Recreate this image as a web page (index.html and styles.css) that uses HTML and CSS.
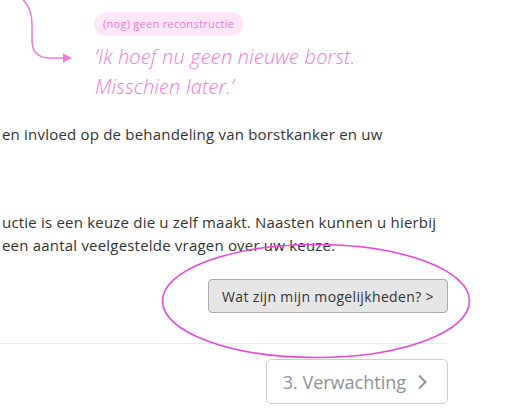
FILE: index.html
```html
<!DOCTYPE html>
<html lang="nl">
<head>
<meta charset="utf-8">
<title>Reconstructie</title>
<link rel="stylesheet" href="styles.css">
</head>
<body>
<div class="page">
  <header class="hero">
    <svg class="arrow" width="94" height="70" viewBox="0 0 94 70">
      <path d="M19 -4 C27 2 32 10 32 24 L32 40 C32 52 38 58 50 58 L64 58" fill="none" stroke="#f07ad8" stroke-width="1.5"/>
      <polygon points="63,53.5 72,58 63,62.5" fill="#f07ad8"/>
    </svg>
    <div class="hero-text">
      <span class="badge">(nog) geen reconstructie</span>
      <blockquote class="quote">‘Ik hoef nu geen nieuwe borst.<br>Misschien later.’</blockquote>
    </div>
  </header>

  <main class="content">
    <p class="intro">en invloed op de behandeling van borstkanker en uw</p>
    <p class="choice">uctie is een keuze die u zelf maakt. Naasten kunnen u hierbij<br>een aantal veelgestelde vragen over uw keuze.</p>
    <div class="actions">
      <div class="options-wrap">
        <button class="options" type="button">Wat zijn mijn mogelijkheden? &gt;</button>
        <svg class="ring" width="310" height="116" viewBox="0 0 310 116">
          <ellipse cx="155" cy="58" rx="153.5" ry="56.5" fill="none" stroke="#e64ad6" stroke-width="1.6"/>
        </svg>
      </div>
    </div>
  </main>

  <hr class="divider">

  <nav class="pager">
    <a class="next" href="#">3. Verwachting
      <svg class="chev" width="11" height="16" viewBox="0 0 11 16"><path d="M2 1.5 L8.5 8 L2 14.5" fill="none" stroke="#8e9399" stroke-width="2"/></svg>
    </a>
  </nav>
</div>
</body>
</html>
```

FILE: styles.css
```css
html, body {
  margin: 0;
  padding: 0;
  background: #fff;
}
body {
  font-family: "Open Sans", "DejaVu Sans", sans-serif;
  color: #333;
  overflow: hidden;
  width: 514px;
  height: 420px;
}
.page {
  width: 448px;
}
.hero {
  display: flex;
  align-items: flex-start;
}
.arrow {
  flex: 0 0 94px;
  display: block;
}
.hero-text {
  padding-top: 12px;
  display: flex;
  flex-direction: column;
  align-items: flex-start;
}
.badge {
  display: inline-block;
  height: 24px;
  line-height: 24px;
  padding: 0 9px;
  border-radius: 12px;
  background: #fde7f9;
  color: #ea7ad9;
  font-size: 11px;
  letter-spacing: 0.28px;
}
.quote {
  margin: 6px 0 0 1px;
  font-size: 20px;
  line-height: 30px;
  font-style: italic;
  font-weight: 300;
  letter-spacing: 0.18px;
  color: #f07ad8;
}
.content {
  padding-left: 2px;
  font-size: 15px;
  line-height: 23px;
  letter-spacing: 0.2px;
}
.content p {
  margin: 0;
}
.intro {
  padding-top: 21px;
  margin-bottom: 65px !important;
}
.actions {
  display: flex;
  justify-content: flex-end;
  margin-top: 22px;
}
.options-wrap {
  position: relative;
}
.options {
  display: block;
  width: 240px;
  height: 34px;
  padding: 0 10px 0 13px;
  border: 1px solid #adadad;
  border-radius: 4px;
  background: #e6e6e6;
  color: #333;
  font-family: "Open Sans", sans-serif;
  font-size: 14px;
  letter-spacing: 0.35px;
  white-space: nowrap;
  text-align: left;
}
.ring {
  position: absolute;
  left: -47px;
  top: -36px;
  pointer-events: none;
}
.divider {
  margin: 30px 0 0;
  border: 0;
  border-top: 1px solid #ececec;
  height: 0;
}
.pager {
  display: flex;
  justify-content: flex-end;
  padding-top: 15px;
}
.next {
  display: flex;
  align-items: center;
  gap: 11px;
  height: 43px;
  padding: 0 19px 0 16px;
  border: 1px solid #cfcfcf;
  border-radius: 5px;
  color: #8e9399;
  text-decoration: none;
  font-size: 18px;
}
.chev {
  display: block;
}
```
